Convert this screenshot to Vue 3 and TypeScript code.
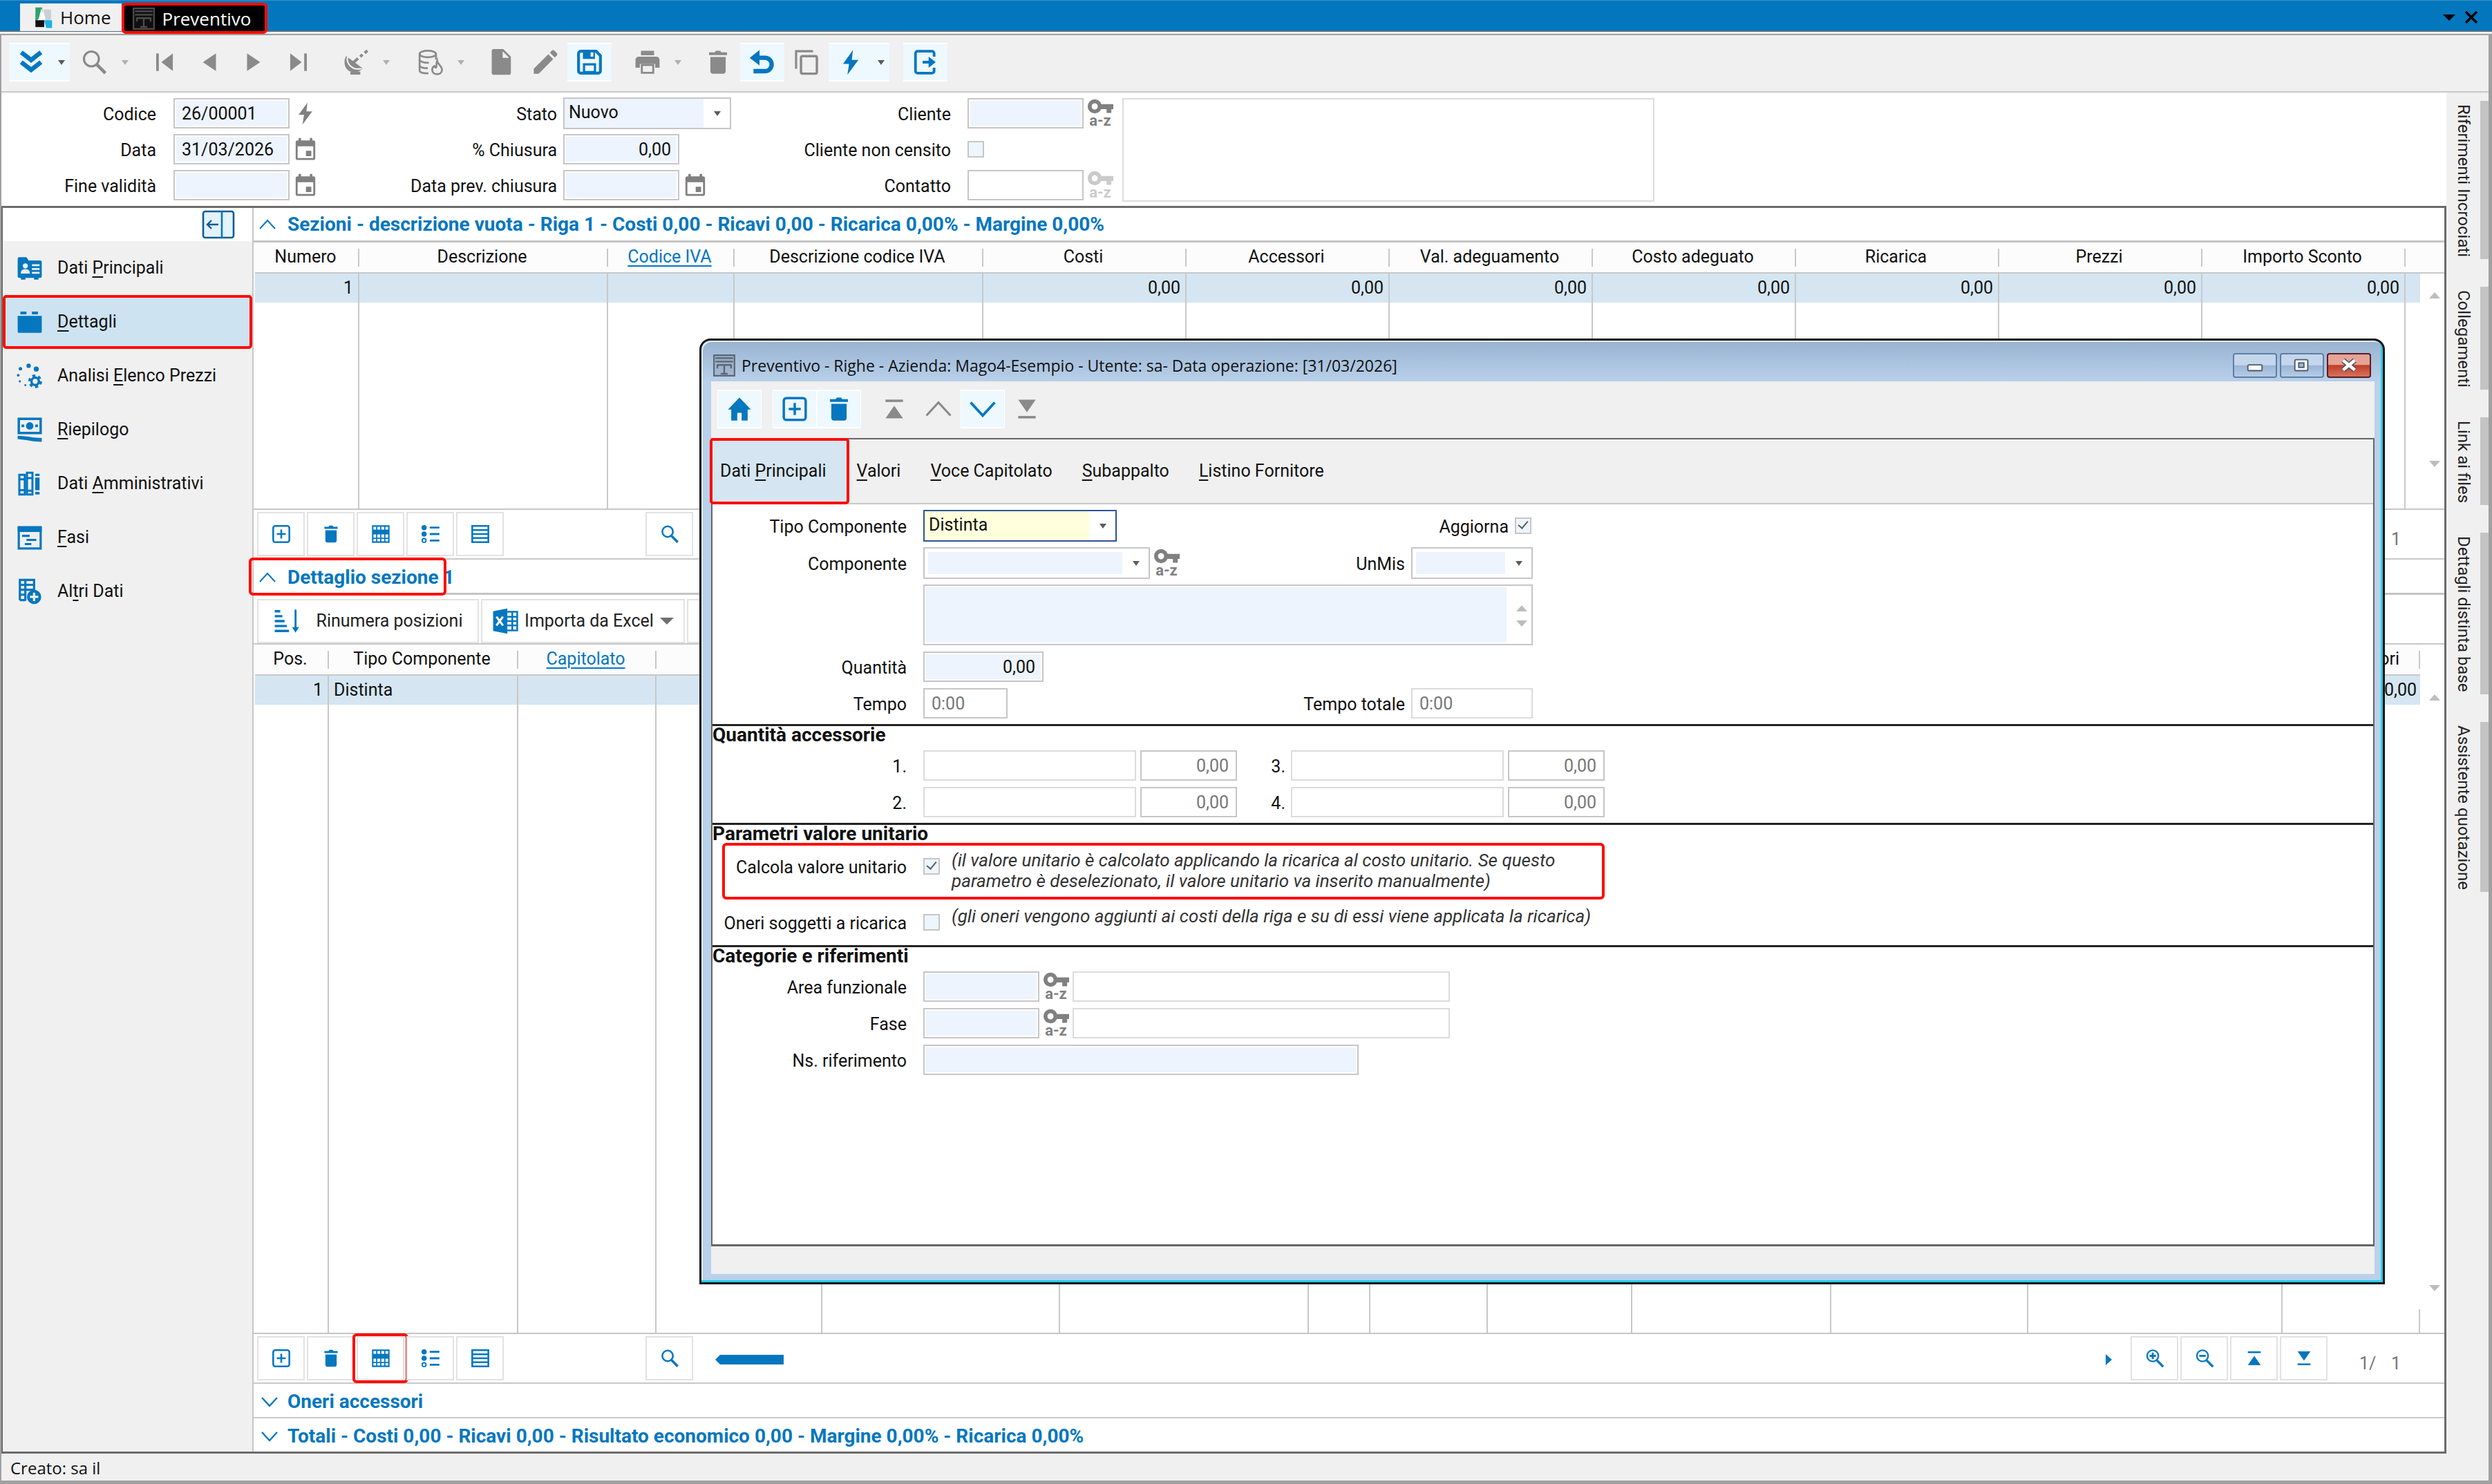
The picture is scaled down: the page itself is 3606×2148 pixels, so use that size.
<script setup lang="ts">
import { h, ref, type FunctionalComponent } from 'vue'

/* Glyphs on a 24 x 24 grid; everything inherits currentColor. */
const glyphs: Record<string, string> = {
  chevrons: '<path d="M3 3l9 7 9-7M3 12l9 7 9-7" fill="none" stroke="currentColor" stroke-width="4.2"/>',
  search: '<circle cx="9" cy="9" r="6.8" fill="none" stroke="currentColor" stroke-width="2"/><path d="M13.8 14l8 8" stroke="currentColor" stroke-width="3"/>',
  find: '<circle cx="9.5" cy="9" r="6.6" fill="none" stroke="currentColor" stroke-width="2.2"/><path d="M14 14l8 8" stroke="currentColor" stroke-width="3"/>',
  first: '<path d="M5 4v16" stroke="currentColor" stroke-width="2.4"/><path d="M19 4v16L8.500 12z" fill="currentColor"/>',
  prev: '<path d="M18 4v16L6 12z" fill="currentColor"/>',
  next: '<path d="M6 4v16l12-8z" fill="currentColor"/>',
  last: '<path d="M19 4v16" stroke="currentColor" stroke-width="2.4"/><path d="M5 4v16l10.500-8z" fill="currentColor"/>',
  dish: '<path d="M3 6.500C0 12 2 19 7 20.500c4 1.500 9 .5 11-3L9.500 11 3 6.500z" fill="currentColor"/><path d="M4.500 7.500C3 11 6 16 10 17.500s7 .5 7 0" fill="none" stroke="#f0f0f0" stroke-width="1.400"/><path d="M10 12l4-3.500M16 7l2-2M20 3.500l2.500-2M7 22h9" stroke="currentColor" stroke-width="2.600"/>',
  stack: '<g fill="none" stroke="currentColor" stroke-width="1.700"><ellipse cx="9.500" cy="4.500" rx="7.500" ry="3"/><path d="M2 4.500v15C2 21.500 6 22.500 10 22M17 4.500v5M2 9.500c0 2 4 3.200 8.500 3M2 14.500c0 2 3 3 7.500 3"/><path d="M18 10.500c.5 3.500 4.500 5 4.500 8.500 0 2.500-2 4-4.500 4s-4.500-1.500-4.500-4c0-2 1-3 2-3.500.5 1 1 1.500 1.500 1.500 1-1.500 0-4 1-6.500z"/></g>',
  doc: '<path d="M5 0h9l7 7v15q0 1.500-1.500 1.500H5Q3.500 23.500 3.500 22V1.500Q3.500 0 5 0z" fill="currentColor"/><path d="M13.500 2v6h6z" fill="#f0f0f0"/>',
  pencil: '<path d="M1.500 22.500V18L14.800 4.700l4.500 4.500L6 22.500zM16.200 3.300l2-2q1-.8 2 0l2.500 2.500q.8 1 0 2l-2 2z" fill="currentColor"/>',
  save: '<path d="M4 2h14l4 4v14a2 2 0 0 1-2 2H4a2 2 0 0 1-2-2V4a2 2 0 0 1 2-2z" fill="none" stroke="currentColor" stroke-width="2.600"/><path d="M6 2h11v7H6zM6 13h12v9H6z" fill="currentColor"/><path d="M13 3h2.500v4H13zM8 15h8v5H8z" fill="#edf8ff"/>',
  print: '<path d="M6 1.500h12v4.200H6zM4.500 7h15Q23 7 23 10v7h-4v-3.500H5V17H1v-7q0-3 3.500-3z" fill="currentColor"/><path d="M6.800 14.500h10.400v7.200H6.800z" fill="none" stroke="currentColor" stroke-width="1.800"/>',
  trash: '<path d="M5 7.200h14V20q0 2.500-2.500 2.500h-9Q5 22.500 5 20zM3.800 3H9l1-1.500h4L15 3h5.200v2.500H3.800z" fill="currentColor"/>',
  undo: '<path d="M6 8h8.500a6 6 0 0 1 0 12.200H4" fill="none" stroke="currentColor" stroke-width="4"/><path d="M.5 8L9.500 1v14z" fill="currentColor"/>',
  copy: '<path d="M2.500 18V2H18" fill="none" stroke="currentColor" stroke-width="2"/><rect x="7" y="6.500" width="14.500" height="16" rx="1.500" fill="none" stroke="currentColor" stroke-width="2.200"/>',
  bolt: '<path d="M14 1L5 13.500h5.500L9 23.500 19 10h-6z" fill="currentColor"/>',
  exit: '<path d="M20 7V4a2 2 0 0 0-2-2H5a2 2 0 0 0-2 2v16a2 2 0 0 0 2 2h13a2 2 0 0 0 2-2v-3" fill="none" stroke="currentColor" stroke-width="2.400"/><path d="M9.500 10.800H15V7l6.500 5-6.500 5v-3.800H9.500z" fill="currentColor"/>',
  calendar: '<path d="M4 3h16q2 0 2 2v16q0 2-2 2H4q-2 0-2-2V5q0-2 2-2zm0 6v12h16V9z" fill="currentColor" fill-rule="evenodd"/><path d="M5 .5h2.500V4H5zM16.500.5H19V4h-2.500zM12.500 13.500H18V19h-5.500z" fill="currentColor"/>',
  key: '<circle cx="7" cy="12" r="4.600" fill="none" stroke="currentColor" stroke-width="3.600"/><path d="M12 10h12v4.500h-1.800V18h-4.400v-3.500H12z" fill="currentColor"/>',
  home: '<path d="M12 1.500L1.500 12.500H4.500V22.500h5.500v-7h4v7h5.500v-10h3z" fill="currentColor"/>',
  plus: '<rect x="2" y="2" width="20" height="20" rx="2.500" fill="none" stroke="currentColor" stroke-width="2.200"/><path d="M12 6.500v11M6.500 12h11" stroke="currentColor" stroke-width="2.200"/>',
  top: '<path d="M4 4.500h16" stroke="currentColor" stroke-width="2.200"/><path d="M4 20.500L12 9l8 11.500z" fill="currentColor"/>',
  bottom: '<path d="M4 19.500h16" stroke="currentColor" stroke-width="2.200"/><path d="M4 3.500L12 15l8-11.500z" fill="currentColor"/>',
  up: '<path d="M1 18L12 6l11 12" fill="none" stroke="currentColor" stroke-width="2"/>',
  down: '<path d="M1 6l11 12L23 6" fill="none" stroke="currentColor" stroke-width="2.400"/>',
  grid: '<path d="M2 2h20v20H2z" fill="none" stroke="currentColor" stroke-width="1.800"/><path d="M2 6.500h20v6H2z" fill="currentColor"/><path d="M7 2v20M12 2v20M17 2v20M2 17.200h20" stroke="currentColor" stroke-width="1.500"/>',
  bullets: '<circle cx="4" cy="4" r="3.200" fill="currentColor"/><circle cx="4" cy="12" r="3.200" fill="currentColor"/><circle cx="4" cy="20" r="2.400" fill="none" stroke="currentColor" stroke-width="1.600"/><path d="M11 4h12M11 12h12M11 20h12" stroke="currentColor" stroke-width="2.400"/>',
  rows: '<path d="M2 2h20v20H2zM2 7h20M2 12h20M2 17h20" fill="none" stroke="currentColor" stroke-width="2.200"/>',
  zoomin: '<circle cx="9.500" cy="9" r="7" fill="none" stroke="currentColor" stroke-width="2"/><path d="M14.500 14.500l8 8" stroke="currentColor" stroke-width="2.800"/><path d="M9.500 5v8M5.500 9h8" stroke="currentColor" stroke-width="2.400"/>',
  zoomout: '<circle cx="9.500" cy="9" r="7" fill="none" stroke="currentColor" stroke-width="2"/><path d="M14.500 14.500l8 8" stroke="currentColor" stroke-width="2.800"/><path d="M5.500 9h8" stroke="currentColor" stroke-width="2.400"/>',
  panel: '<rect x="1" y="2.500" width="22" height="19" rx="1.500" fill="#e4f2fb" stroke="#0b5c94" stroke-width="1.300"/><path d="M14.500 2.500v19" stroke="currentColor" stroke-width="1.300"/><path d="M12 12H4M7 9l-3 3 3 3" fill="none" stroke="#0b5c94" stroke-width="1.200"/>',
  idcard: '<path d="M1 3.500Q1 2 2.500 2H9l2 3h10.500Q23 5 23 6.500v13Q23 21 21.500 21H20v1.500h-4V21H8v1.500H4V21H2.500Q1 21 1 19.500z" fill="currentColor"/><circle cx="8" cy="10" r="2.300" fill="#f0f0f0"/><path d="M3.800 17q0-4 4.200-4t4.200 4zM14 8.500h7v1.700h-7zM14 12h7v1.700h-7zM14 15.500h7v1.700h-7z" fill="#f0f0f0"/>',
  box: '<path d="M1 6.500h22V21q0 1-1 1H2q-1 0-1-1zM3.500 2.500H9V5H3.500zM14 2.500h5.500V5H14z" fill="currentColor"/>',
  process: '<g fill="currentColor"><circle cx="11" cy="2.800" r="2"/><circle cx="18" cy="5.800" r="2.300"/><circle cx="3.500" cy="5.500" r="1.600"/><circle cx="1.500" cy="11.500" r="1.200"/><circle cx="3" cy="17" r="1"/><circle cx="8" cy="20.500" r=".9"/></g><circle cx="17" cy="17" r="3.400" fill="none" stroke="currentColor" stroke-width="2.200"/><circle cx="17" cy="17" r="5.200" fill="none" stroke="currentColor" stroke-width="2.200" stroke-dasharray="2.700 2.740"/>',
  cash: '<path d="M2 2h20v13H2z" fill="none" stroke="currentColor" stroke-width="2.200"/><circle cx="12" cy="8.500" r="3.400" fill="currentColor"/><path d="M4.500 8.500h2.500M17 8.500h2.500" stroke="currentColor" stroke-width="2.400"/><path d="M1 17.500c7 0 14 2 22 2v3.500c-8 0-15-2-22-2.500z" fill="currentColor"/>',
  binders: '<g fill="none" stroke="currentColor" stroke-width="1.900"><path d="M2.500 4h5v18h-5zM9.500 2h5v20h-5zM2.500 8h5M9.500 7h5M2.500 18h5M9.500 18.500h5"/></g><path d="M17 3h4v2h-4zM17 6.500h4V18h-4zM17 19.500h4V22h-4z" fill="currentColor"/>',
  gantt: '<path d="M2 2.500h20v19.500H2z" fill="none" stroke="currentColor" stroke-width="2"/><path d="M1 2h22v5H1z" fill="currentColor"/><path d="M5 10.500h7M9 14.200h9M7.500 18h6" stroke="currentColor" stroke-width="2"/>',
  dbplus: '<path d="M3 1.500h13v9H3zM3 6h13M8 1.500v9M3 10.500V20M3 15h5M3 20h5M8 10.500v10" fill="none" stroke="currentColor" stroke-width="2"/><circle cx="16" cy="17" r="6.500" fill="currentColor"/><path d="M16 13.200v7.600M12.200 17h7.600" stroke="#f0f0f0" stroke-width="2"/>',
  sort: '<path d="M1 3h5M1 7.500h7M1 12h9M1 16.500h11M1 21h13" stroke="currentColor" stroke-width="2.200"/><path d="M20 1.500v18" stroke="currentColor" stroke-width="1.800"/><path d="M16.800 17.500h6.400L20 22.500z" fill="currentColor"/>',
  excel: '<path d="M1 3l13-2.500v23L1 21z" fill="currentColor"/><path d="M4 8l6 8M10 8l-6 8" stroke="#fff" stroke-width="2"/><path d="M14 3.500h9v17h-9M14 8h9M14 12h9M14 16h9M18.500 3.500v17" fill="none" stroke="currentColor" stroke-width="1.600"/>',
  brand: '<path d="M3 2h7v9l-7 5z" fill="#2fa36b"/><path d="M11 4h8v10l-5 3z" fill="#c9d0d4"/><path d="M3 15h9v7H3z" fill="#101010"/><path d="M12 15h8v8h-6z" fill="#1fb0e6"/><path d="M9 3l4 10-7 2z" fill="#fff"/>',
  form: '<path d="M1.500 1.500h21v21h-21z" fill="currentColor" fill-opacity=".2" stroke="currentColor" stroke-width="1.500"/><path d="M3 4.500h18M3 8h18" stroke="currentColor" stroke-width="1.500"/><path d="M5 11.500h14M5 11v4M19 11v4M12 12v8M8.500 20.500h7" fill="none" stroke="currentColor" stroke-width="1.700"/>',
}

const Icon: FunctionalComponent<{ name: string }> = (props) =>
  h('svg', { viewBox: '0 0 24 24', 'aria-hidden': 'true', innerHTML: glyphs[props.name] })
Icon.props = ['name']

interface Tool { icon: string; title: string; on?: boolean; menu?: boolean }
const toolGroups: { wide: boolean; tools: Tool[] }[] = [
  { wide: false, tools: [{ icon: 'chevrons', title: 'Altro', on: true, menu: true }, { icon: 'search', title: 'Cerca', menu: true }] },
  { wide: false, tools: [{ icon: 'first', title: 'Primo' }, { icon: 'prev', title: 'Precedente' }, { icon: 'next', title: 'Successivo' }, { icon: 'last', title: 'Ultimo' }] },
  { wide: true, tools: [{ icon: 'dish', title: 'Radar', menu: true }] },
  { wide: true, tools: [{ icon: 'stack', title: 'Query', menu: true }] },
  { wide: false, tools: [{ icon: 'doc', title: 'Nuovo' }, { icon: 'pencil', title: 'Modifica' }, { icon: 'save', title: 'Salva', on: true }] },
  { wide: true, tools: [{ icon: 'print', title: 'Stampa', menu: true }] },
  { wide: false, tools: [{ icon: 'trash', title: 'Elimina' }, { icon: 'undo', title: 'Annulla', on: true }, { icon: 'copy', title: 'Copia' }, { icon: 'bolt', title: 'Azioni', on: true, menu: true }] },
  { wide: true, tools: [{ icon: 'exit', title: 'Esci', on: true }] },
]
const dialogGroups: Tool[][] = [
  [{ icon: 'home', title: 'Home', on: true }],
  [{ icon: 'plus', title: 'Aggiungi riga', on: true }, { icon: 'trash', title: 'Elimina riga', on: true }],
  [{ icon: 'top', title: 'Prima riga' }, { icon: 'up', title: 'Riga precedente' }, { icon: 'down', title: 'Riga successiva', on: true }, { icon: 'bottom', title: 'Ultima riga' }],
]
const gridTools: Tool[] = [
  { icon: 'plus', title: 'Aggiungi' }, { icon: 'trash', title: 'Elimina' }, { icon: 'grid', title: 'Apri riga' },
  { icon: 'bullets', title: 'Elenco' }, { icon: 'rows', title: 'Colonne' },
]
const pageTools: Tool[] = [
  { icon: 'zoomin', title: 'Ingrandisci' }, { icon: 'zoomout', title: 'Riduci' },
  { icon: 'top', title: 'Inizio' }, { icon: 'bottom', title: 'Fine' },
]

/* [text before, access key, text after] */
type Caption = [string, string, string]
const menu: { icon: string; text: Caption; current?: boolean }[] = [
  { icon: 'idcard', text: ['Dati ', 'P', 'rincipali'] },
  { icon: 'box', text: ['', 'D', 'ettagli'], current: true },
  { icon: 'process', text: ['Analisi ', 'E', 'lenco Prezzi'] },
  { icon: 'cash', text: ['', 'R', 'iepilogo'] },
  { icon: 'binders', text: ['Dati ', 'A', 'mministrativi'] },
  { icon: 'gantt', text: ['', 'F', 'asi'] },
  { icon: 'dbplus', text: ['Al', 't', 'ri Dati'] },
]
const tabs: Caption[] = [
  ['Dati ', 'P', 'rincipali'], ['', 'V', 'alori'], ['', 'V', 'oce Capitolato'], ['', 'S', 'ubappalto'], ['', 'L', 'istino Fornitore'],
]
const sideTabs = ['Riferimenti Incrociati', 'Collegamenti', 'Link ai files', 'Dettagli distinta base', 'Assistente quotazione']

interface Column { title: string; width?: number; value?: string; num?: boolean; link?: boolean }
const amount = (title: string): Column => ({ title, width: 294, value: '0,00', num: true })
const sections: Column[] = [
  { title: 'Numero', width: 151, value: '1', num: true },
  { title: 'Descrizione', width: 360 },
  { title: 'Codice IVA', width: 183, link: true },
  { title: 'Descrizione codice IVA', width: 360 },
  ...['Costi', 'Accessori', 'Val. adeguamento', 'Costo adeguato', 'Ricarica', 'Prezzi', 'Importo Sconto'].map(amount),
  { title: '' },
]
const details: Column[] = [
  { title: 'Pos.', width: 107, value: '1', num: true },
  { title: 'Tipo Componente', width: 274, value: 'Distinta' },
  { title: 'Capitolato', width: 200, link: true },
  ...[240, 344, 360, 89, 170, 209, 288, 285, 368].map((width) => ({ title: '', width })),
  { title: 'Accessori', value: '0,00', num: true },
]

const codice = ref('26/00001')
const data = ref('31/03/2026')
const chiusura = ref('0,00')
const quantita = ref('0,00')
const aggiorna = ref(true)
const calcola = ref(true)
</script>

<template>
  <div class="app">
    <header class="topbar">
      <button class="doc-tab"><Icon name="brand" class="i34" />Home</button>
      <button class="doc-tab active"><Icon name="form" class="i34" />Preventivo</button>
      <span class="spacer"></span>
      <button class="win-icon" aria-label="Elenco schede"><svg viewBox="0 0 20 20"><path d="M1 6h18l-9 9z" fill="#000" /></svg></button>
      <button class="win-icon" aria-label="Chiudi scheda"><svg viewBox="0 0 20 20"><path d="M2 2l16 16M18 2L2 18" stroke="#000" stroke-width="3.500" /></svg></button>
    </header>

    <div class="frame">
      <div class="toolbar">
        <div v-for="(g, i) in toolGroups" :key="i" class="group" :class="{ wide: g.wide }">
          <button v-for="t in g.tools" :key="t.icon" class="tool" :class="{ on: t.on }" :title="t.title">
            <span class="tool-icon"><Icon :name="t.icon" class="i38" /></span>
            <span v-if="t.menu" class="tool-caret"><i class="caret"></i></span>
          </button>
        </div>
      </div>

      <div class="desk">
        <div class="workspace">
          <form class="head-form" @submit.prevent>
            <div class="col c1">
              <div class="field"><label for="codice">Codice</label><input id="codice" v-model="codice" class="w167"><Icon name="bolt" class="grey i34" /></div>
              <div class="field"><label for="data">Data</label><input id="data" v-model="data" class="w167"><Icon name="calendar" class="grey i34" /></div>
              <div class="field"><label for="fine">Fine validità</label><input id="fine" class="w167"><Icon name="calendar" class="grey i34" /></div>
            </div>
            <div class="col c2">
              <div class="field"><label for="stato">Stato</label><span class="pick w243"><select id="stato"><option>Nuovo</option></select><i class="caret"></i></span></div>
              <div class="field"><label for="chiusura">% Chiusura</label><input id="chiusura" v-model="chiusura" class="w167 num"></div>
              <div class="field"><label for="prev">Data prev. chiusura</label><input id="prev" class="w167"><Icon name="calendar" class="grey i34" /></div>
            </div>
            <div class="col c3">
              <div class="field"><label for="cliente">Cliente</label><input id="cliente" class="w167"><span class="key"><Icon name="key" class="key-icon" />a-z</span></div>
              <div class="field"><label for="censito">Cliente non censito</label><input id="censito" type="checkbox"></div>
              <div class="field"><label for="contatto">Contatto</label><input id="contatto" class="w167 plain"><span class="key dim"><Icon name="key" class="key-icon" />a-z</span></div>
            </div>
            <textarea class="client-box" aria-label="Dati cliente" readonly></textarea>
          </form>

          <div class="main">
            <nav class="sidebar">
              <div class="side-top"><button class="fold" aria-label="Comprimi menu"><Icon name="panel" class="i48 blue" /></button></div>
              <button v-for="m in menu" :key="m.icon" class="side-item" :class="{ current: m.current }">
                <Icon :name="m.icon" class="i38 blue" />
                <span>{{ m.text[0] }}<u>{{ m.text[1] }}</u>{{ m.text[2] }}</span>
              </button>
            </nav>

            <div class="panels">
              <h2 class="section thick"><Icon name="up" class="i24" />Sezioni - descrizione vuota - Riga 1 - Costi 0,00 - Ricavi 0,00 - Ricarica 0,00% - Margine 0,00%</h2>
              <div class="grid-box first-grid">
                <table>
                  <colgroup><col v-for="(c, i) in sections" :key="i" :style="c.width ? { width: c.width + 'px' } : undefined"></colgroup>
                  <thead><tr><th v-for="(c, i) in sections" :key="i" :class="{ last: !c.width }"><a v-if="c.link" href="#">{{ c.title }}</a><template v-else>{{ c.title }}</template></th></tr></thead>
                  <tbody>
                    <tr class="sel"><td v-for="(c, i) in sections" :key="i" :class="{ num: c.num }">{{ c.value }}</td></tr>
                    <tr class="blank"><td v-for="(c, i) in sections" :key="i"></td></tr>
                  </tbody>
                </table>
                <div class="gutter ruled"><i class="arrow up"></i><i class="arrow"></i></div>
              </div>
              <div class="grid-bar">
                <button v-for="t in gridTools" :key="t.icon" class="cell-btn" :title="t.title"><Icon :name="t.icon" class="i28" /></button>
                <button class="cell-btn seek" title="Trova"><Icon name="find" class="i28" /></button>
                <span class="spacer"></span>
                <span class="pages"><span>1/</span><span>1</span></span>
              </div>

              <h2 class="section thick marked"><Icon name="up" class="i24" />Dettaglio sezione 1</h2>
              <div class="grid-bar actions">
                <button class="cell-btn text-btn renum"><Icon name="sort" class="i38 blue" />Rinumera posizioni</button>
                <button class="cell-btn text-btn"><Icon name="excel" class="i38 blue" />Importa da Excel<i class="caret big"></i></button>
                <button class="cell-btn" aria-label="Altre azioni"></button>
              </div>
              <div class="grid-box fill">
                <table>
                  <colgroup><col v-for="(c, i) in details" :key="i" :style="c.width ? { width: c.width + 'px' } : undefined"></colgroup>
                  <thead><tr><th v-for="(c, i) in details" :key="i" :class="{ tail: !c.width }"><a v-if="c.link" href="#">{{ c.title }}</a><template v-else>{{ c.title }}</template></th></tr></thead>
                  <tbody>
                    <tr class="sel"><td v-for="(c, i) in details" :key="i" :class="{ num: c.num }">{{ c.value }}</td></tr>
                    <tr class="blank"><td v-for="(c, i) in details" :key="i"></td></tr>
                  </tbody>
                </table>
                <div class="gutter"><i class="arrow up"></i><i class="arrow"></i></div>
              </div>
              <div class="grid-bar">
                <button v-for="t in gridTools" :key="t.icon" class="cell-btn" :class="{ ringed: t.icon === 'grid' }" :title="t.title"><Icon :name="t.icon" class="i28" /></button>
                <button class="cell-btn seek" title="Trova"><Icon name="find" class="i28" /></button>
                <span class="hscroll"></span>
                <span class="spacer"></span>
                <i class="hnext"></i>
                <button v-for="t in pageTools" :key="t.icon" class="cell-btn" :title="t.title"><Icon :name="t.icon" class="i28" /></button>
                <span class="pages"><span>1/</span><span>1</span></span>
              </div>
              <h2 class="section low"><Icon name="down" class="i24" />Oneri accessori</h2>
              <h2 class="section low end"><Icon name="down" class="i24" />Totali - Costi 0,00 - Ricavi 0,00 - Risultato economico 0,00 - Margine 0,00% - Ricarica 0,00%</h2>
            </div>
          </div>
        </div>

        <aside class="strip">
          <button v-for="s in sideTabs" :key="s">{{ s }}</button>
        </aside>
      </div>
      <footer class="status">Creato: sa il</footer>
    </div>

    <section class="dialog" role="dialog" aria-labelledby="dlg-title">
      <header class="dlg-head">
        <Icon name="form" class="i34 steel" />
        <h1 id="dlg-title">Preventivo - Righe - Azienda: Mago4-Esempio - Utente: sa- Data operazione: [31/03/2026]</h1>
        <span class="spacer"></span>
        <button class="win-btn" aria-label="Riduci a icona"><svg viewBox="0 0 64 36"><rect x="21" y="17" width="22" height="9" rx="2" fill="#fff" stroke="#4d5a6b" stroke-width="2" /></svg></button>
        <button class="win-btn" aria-label="Ingrandisci"><svg viewBox="0 0 64 36"><rect x="21" y="9" width="20" height="17" rx="2" fill="#fff" stroke="#4d5a6b" stroke-width="2" /><rect x="27" y="14" width="8" height="7" fill="#9fb8d6" stroke="#4d5a6b" stroke-width="2" /></svg></button>
        <button class="win-btn close" aria-label="Chiudi"><svg viewBox="0 0 64 36"><path d="M23 10l18 15M41 10L23 25" stroke="#51505c" stroke-width="8" /><path d="M23 10l18 15M41 10L23 25" stroke="#fff" stroke-width="5" /></svg></button>
      </header>
      <div class="dlg-body">
        <div class="dlg-tools">
          <div v-for="(g, i) in dialogGroups" :key="i" class="group">
            <button v-for="t in g" :key="t.icon" class="tool" :class="{ on: t.on }" :title="t.title"><span class="tool-icon"><Icon :name="t.icon" class="i38" /></span></button>
          </div>
        </div>
        <div class="dlg-page">
          <nav class="tabs">
            <button v-for="(t, i) in tabs" :key="i" class="tab" :class="{ current: i === 0 }"><span>{{ t[0] }}<u>{{ t[1] }}</u>{{ t[2] }}</span></button>
          </nav>
          <form class="dlg-form" @submit.prevent>
            <div class="block top-block">
              <div class="field tall"><label for="tipo">Tipo Componente</label><span class="pick focus w280"><select id="tipo"><option>Distinta</option></select><i class="caret"></i></span>
                <label for="aggiorna" class="second agg">Aggiorna</label><input id="aggiorna" v-model="aggiorna" type="checkbox"></div>
              <div class="field"><label for="componente">Componente</label><span class="pick inset w328"><select id="componente"><option></option></select><i class="caret"></i></span><span class="key"><Icon name="key" class="key-icon" />a-z</span>
                <label for="unmis" class="second um">UnMis</label><span class="pick inset w176"><select id="unmis"><option></option></select><i class="caret"></i></span></div>
              <div class="field memo-row"><label for="memo"></label><span class="memo"><textarea id="memo" aria-label="Descrizione componente"></textarea><span class="memo-arrows"><i class="arrow up"></i><i class="arrow"></i></span></span></div>
              <div class="field"><label for="quantita">Quantità</label><input id="quantita" v-model="quantita" class="w174 num"></div>
              <div class="field"><label for="tempo">Tempo</label><input id="tempo" class="w122 plain" value="0:00" readonly>
                <label for="totale" class="second tot">Tempo totale</label><input id="totale" class="w176 plain light" value="0:00" readonly></div>
            </div>
            <fieldset class="block">
              <legend>Quantità accessorie</legend>
              <div v-for="r in [[1, 3], [2, 4]]" :key="r[0]" class="field">
                <template v-for="(n, i) in r" :key="n">
                  <label :for="'acc' + n" :class="{ nth: i === 1 }">{{ n }}.</label><input :id="'acc' + n" class="w308 plain light" readonly><input class="w140 plain num" value="0,00" :aria-label="'Quantità ' + n" readonly>
                </template>
              </div>
            </fieldset>
            <fieldset class="block params">
              <legend>Parametri valore unitario</legend>
              <div class="field boxed"><label for="calcola">Calcola valore unitario</label><input id="calcola" v-model="calcola" type="checkbox"><p>(il valore unitario è calcolato applicando la ricarica al costo unitario. Se questo<br>parametro è deselezionato, il valore unitario va inserito manualmente)</p></div>
              <div class="field oneri"><label for="oneri">Oneri soggetti a ricarica</label><input id="oneri" type="checkbox"><p>(gli oneri vengono aggiunti ai costi della riga e su di essi viene applicata la ricarica)</p></div>
            </fieldset>
            <fieldset class="block">
              <legend>Categorie e riferimenti</legend>
              <div class="field"><label for="area">Area funzionale</label><input id="area" class="w167"><span class="key"><Icon name="key" class="key-icon" />a-z</span><input class="w546 plain light" aria-label="Descrizione area funzionale" readonly></div>
              <div class="field"><label for="fase">Fase</label><input id="fase" class="w167"><span class="key"><Icon name="key" class="key-icon" />a-z</span><input class="w546 plain light" aria-label="Descrizione fase" readonly></div>
              <div class="field"><label for="rif">Ns. riferimento</label><input id="rif" class="w630"></div>
            </fieldset>
          </form>
        </div>
        <div class="dlg-status"></div>
      </div>
    </section>
  </div>
</template>

<style>
body { margin: 0; }
</style>

<style scoped>
* { box-sizing: border-box; }
.app { position: relative; display: flex; flex-direction: column; min-height: 100vh; font: 25px/30px Roboto, sans-serif; color: #111; background: #f0f0f0; }
button, input, select, textarea { font: inherit; color: inherit; margin: 0; }
button { padding: 0; border: 0; background: none; display: flex; align-items: center; }
svg { display: block; flex: none; }
h1, h2, p { margin: 0; }
u { text-underline-offset: 4px; text-decoration-thickness: 2px; }
.spacer { flex: 1; }
.blue { color: #0477bf; }
.grey { color: #808080; }
.steel { color: #5c6773; }
.i24 { width: 24px; height: 24px; }
.i28 { width: 28px; height: 28px; }
.i34 { width: 34px; height: 34px; }
.i38 { width: 38px; height: 38px; }
.i48 { width: 48px; height: 48px; }

.caret { display: block; width: 0; height: 0; border: 5px solid transparent; border-top: 7px solid #5c5c5c; border-bottom: 0; }
.caret.big { border-width: 10px 10px 0; border-top-color: #707070; }
.arrow { display: block; width: 0; height: 0; border: 8px solid transparent; border-top: 9px solid #bdbdbd; border-bottom: 0; }
.arrow.up { border-top: 0; border-bottom: 9px solid #bdbdbd; }

.topbar { display: flex; align-items: flex-start; height: 46px; padding: 4px 14px 0 29px; background: #0277be; border-top: 1px solid #3d8fc4; border-bottom: 2px solid #56707f; font: 26px/36px "Open Sans", "Noto Sans", sans-serif; }
.doc-tab { height: 40px; gap: 6px; padding: 0 16px 0 18px; background: #f0f0f0; }
.doc-tab.active { position: relative; height: 45px; margin-top: -1px; padding: 0 20px 0 11px; gap: 9px; border: 4px solid #ff0c00; border-radius: 6px; background: #000; color: #fff; }
.doc-tab.active svg { color: #4c4c4c; }
.win-icon { width: 32px; height: 40px; justify-content: center; }
.win-icon svg { width: 20px; height: 20px; }

.frame { flex: 1; display: flex; flex-direction: column; margin-top: 3px; border: solid #a0a0a0; border-width: 2px 5px 5px 2px; }
.toolbar { display: flex; height: 83px; padding: 11px 0 0 11px; border-bottom: 2px solid #c8c8c8; }
.group { display: flex; margin-left: 14px; }
.group:first-child { margin-left: 0; }
.group.wide { margin-left: 20px; }
.toolbar .group:first-child { gap: 4px; }
.tool { height: 56px; color: #8a8a8a; border: 0 solid #fff; }
.tool.on { color: #0477bf; background: #edf8ff; border-width: 2px 0; }
.tool-icon { width: 64px; display: flex; justify-content: center; }
.tool-caret { width: 24px; display: flex; justify-content: center; }
.tool:not(.on) .caret { border-top-color: #b0b0b0; }

.desk { flex: 1; display: flex; }
.workspace { flex: 1; min-width: 0; display: flex; flex-direction: column; }
.head-form { display: flex; height: 164px; padding: 8px 0 0; background: #fff; }
.col { display: flex; flex-direction: column; gap: 8px; }
.field { display: flex; align-items: center; height: 44px; }
.field label { flex: none; padding-top: 3px; text-align: right; white-space: nowrap; }
.c1 { width: 464px; }
.c1 label { width: 224px; margin-right: 25px; }
.c2 { width: 606px; }
.c2 label { width: 340px; margin-right: 9px; }
.c3 { width: 552px; }
.c3 label { width: 304px; margin-right: 24px; }
.c1 .grey, .c2 .grey { margin-left: 6px; }

input, textarea { border: 2px solid #c6c6c6; border-radius: 0; background: #edf4fd; box-shadow: inset 0 0 0 2px #fff; outline: 0; }
input { height: 44px; padding: 0 10px; }
input.plain { background: #fff; color: #777; }
input.light { border-color: #dcdcdc; }
.num { text-align: right; }
input[type='checkbox'] { appearance: none; position: relative; flex: none; width: 24px; height: 24px; padding: 0; box-shadow: none; background: #edf6fd; }
input[type='checkbox']:checked::after { content: ''; position: absolute; left: 6px; top: 0; width: 6px; height: 12px; border: solid #5a5a5a; border-width: 0 2px 2px 0; transform: rotate(40deg); }
.w122 { width: 122px; }
.w140 { width: 140px; }
.w167 { width: 168px; }
.w174 { width: 174px; }
.w176 { width: 176px; }
.w243 { width: 243px; }
.w280 { width: 280px; }
.w308 { width: 308px; }
.w328 { width: 328px; }
.w546 { width: 546px; }
.w630 { width: 630px; }
.pick { position: relative; display: block; }
.pick select { display: block; width: 100%; height: 46px; padding: 0 6px 2px; border: 2px solid #c6c6c6; border-radius: 0; appearance: none; outline: 0; background: linear-gradient(to left, #fff 38px, #edf4fd 38px); }
.pick.focus select { border-color: #2d5597; background: linear-gradient(to left, #fff 38px, #ffffdc 38px); }
.pick.inset select { box-shadow: inset 0 0 0 5px #fff; }
.pick .caret { position: absolute; right: 15px; top: 20px; }
.key { display: flex; flex-direction: column; align-items: center; width: 48px; height: 44px; font: bold 22px/22px Roboto, sans-serif; color: #808080; }
.key.dim { color: #cacaca; }
.key-icon { width: 38px; height: 38px; margin: -7px 0 -9px; }
.client-box { flex: none; width: 770px; height: 150px; border-color: #dcdcdc; background: #fff; resize: none; }

.main { flex: 1; display: flex; border: solid #6b6b6b; border-width: 3px 3px 3px 2px; background: #fff; }
.sidebar { flex: none; width: 361px; display: flex; flex-direction: column; background: #f0f0f0; }
.side-top { display: flex; justify-content: flex-end; align-items: center; height: 48px; padding-right: 25px; background: #fff; }
.side-item { height: 78px; gap: 21px; padding-left: 20px; border: 0 solid #ff0c00; text-align: left; }
.side-item.current { padding-left: 16px; border-width: 4px; border-radius: 5px; background: #cde3f1; }
.panels { flex: 1; min-width: 0; display: flex; flex-direction: column; border-left: 2px solid #c6c6c6; }
.section { position: relative; display: flex; align-items: center; gap: 17px; height: 50px; padding-left: 8px; border-bottom: 2px solid #c8c8c8; font: bold 28px/32px Roboto, sans-serif; color: #0477bf; white-space: nowrap; }
.section.thick { border-bottom: 3px solid #c4c4c4; }
.section.low { padding: 3px 0 0 11px; gap: 14px; }
.section.end { flex: none; height: 48px; border: 0; }
.section.marked { height: 51px; padding-top: 3px; }
.section.marked::before { content: ''; position: absolute; left: -7px; top: -3px; width: 278px; height: 47px; border: 4px solid #ff0c00; border-radius: 6px; }
.grid-box { display: flex; padding-left: 2px; border-bottom: 2px solid #c6c6c6; }
.first-grid { height: 387px; }
.grid-box.fill { flex: 1; }
table { flex: 1; width: 100%; min-width: 0; table-layout: fixed; border-collapse: separate; border-spacing: 0; }
th { height: 45px; padding: 0 5px 2px 0; border-bottom: 2px solid #c8c8c8; font-weight: normal; white-space: nowrap; background: #fcfcfc linear-gradient(#c8c8c8, #c8c8c8) no-repeat right center / 2px 26px; }
th.last { background: #fcfcfc; }
th.tail { padding-right: 30px; text-align: right; }
th a { color: #0477bf; text-underline-offset: 4px; text-decoration-thickness: 2px; }
td { padding: 0 7px; border-right: 2px solid #c8c8c8; white-space: nowrap; }
td:last-child { padding-right: 5px; border-right: 0; }
.sel td { height: 42px; background: #d5e6f2; }
.fill .blank td:last-child { background: linear-gradient(#c8c8c8, #c8c8c8) no-repeat right bottom / 2px 34px; }
.blank td { height: auto; }
.sel { height: 42px; }
.gutter { flex: none; width: 35px; display: flex; flex-direction: column; justify-content: space-between; align-items: center; padding: 72px 0 60px 6px; }
.gutter.ruled { background: linear-gradient(#fcfcfc 43px, #c8c8c8 43px, #c8c8c8 45px, #fff 45px); }
.grid-bar { display: flex; align-items: center; gap: 3px; height: 72px; padding-left: 5px; border-bottom: 2px solid #c8c8c8; }
.grid-bar.actions { padding-top: 5px; }
.cell-btn { position: relative; flex: none; justify-content: center; width: 69px; height: 64px; border: 2px solid #e2e2e2; background: #fff; color: #0477bf; }
.seek { margin-left: 202px; }
.text-btn { width: 295px; color: #222; gap: 9px; }
.text-btn.renum { width: 321px; gap: 24px; }
.ringed::after { content: ''; position: absolute; inset: -6px -8px; border: 4px solid #ff0c00; border-radius: 6px; }
.pages { display: flex; justify-content: space-between; width: 60px; margin: 16px 63px 0 43px; color: #777; }
.hscroll { width: 99px; height: 14px; margin: 4px 0 0 29px; background: #0477bf; clip-path: polygon(0 50%, 7px 0, 100% 0, 100% 100%, 7px 100%); }
.hnext { width: 0; height: 0; margin: 4px 24px 0 0; border: 8px solid transparent; border-left: 9px solid #0477bf; border-right: 0; }

.strip { flex: none; width: 61px; display: flex; flex-direction: column; gap: 40px; padding-top: 12px; }
.strip button { justify-content: flex-start; width: 61px; padding: 5px 0 3px; border-right: 12px solid #c4c4c4; writing-mode: vertical-rl; font-size: 24px; line-height: 49px; color: #222; white-space: nowrap; }
.status { height: 39px; padding-left: 13px; font: 24px/42px "Open Sans", "Noto Sans", sans-serif; }

.dialog { position: absolute; inset: 490px 155px 289px 1012px; display: flex; flex-direction: column; padding: 0 12px 12px 14px; border: 3px solid #111; border-radius: 16px 16px 0 0; background: linear-gradient(#98b3d1, #b9d1ea 60px); box-shadow: inset -3px -3px 0 #27cdea, inset 2px 2px 0 #dfeaf6; }
.dlg-head { display: flex; align-items: center; height: 59px; padding: 13px 5px 0 2px; gap: 4px; }
.dlg-head h1 { margin-left: 4px; font: 23px/32px "Open Sans", "Noto Sans", sans-serif; white-space: nowrap; }
.win-btn { width: 64px; height: 36px; border: 2px solid #5f7ea5; border-radius: 4px; background: linear-gradient(#c3d6ec 48%, #9ab5d5 50%, #b4cce7); justify-content: center; }
.win-btn svg { width: 60px; height: 34px; }
.win-btn.close { border-color: #5a1c22; background: linear-gradient(#e6a397 45%, #bf3f25 50%, #d67260); }
.dlg-body { flex: 1; display: flex; flex-direction: column; background: #f0f0f0; }
.dlg-tools { display: flex; height: 82px; padding: 12px 0 0 9px; }
.dlg-tools .tool.on { border-width: 2px 1px; }
.dlg-tools .tool { width: 64px; justify-content: center; }
.dlg-tools .group + .group { margin-left: 16px; }
.dlg-page { flex: 1; display: flex; flex-direction: column; border: solid #666; border-width: 2px 2px 3px; background: #fff; }
.tabs { display: flex; height: 94px; background: #f0f0f0; border-bottom: 2px solid #c8c8c8; }
.tab { padding: 0 30px 0 13px; }
.tab.current { margin: -2px -2px -2px -4px; padding: 0 29px 0 11px; border: 4px solid #ff0c00; border-radius: 5px; background: #d5e6f2; z-index: 1; }
.block { display: flex; flex-direction: column; gap: 9px; min-width: 0; margin: 0; padding: 0 0 8px; border: 0; border-bottom: 3px solid #222; }
.block:last-child { border: 0; }
.top-block { padding-top: 8px; }
.block .field.tall { height: 46px; }
.block .field label { width: 281px; margin-right: 24px; }
.block .field label.second { margin-right: 9px; }
.block .field label.agg { width: 567px; }
.block .field label.um { width: 321px; }
.block .field label.tot { width: 575px; }
.block .field label.nth { width: 70px; margin-right: 8px; }
.w308 + .w140 { margin-left: 6px; }
.block legend { float: left; padding: 0; font: bold 28px/26px Roboto, sans-serif; }
.block .memo-row { height: 88px; }
.memo { position: relative; display: block; width: 882px; height: 88px; }
.memo textarea { display: block; width: 100%; height: 88px; resize: none; background: linear-gradient(to left, #fff 36px, #edf4fd 36px); }
.memo-arrows { position: absolute; right: 8px; top: 30px; display: flex; flex-direction: column; gap: 13px; }
.block.params { gap: 0; padding: 0; }
.field p { margin-left: 17px; font-size: 26px; font-style: italic; color: #333; white-space: nowrap; }
.block .field.boxed { width: 1277px; height: 82px; margin-left: 14px; padding-bottom: 14px; border: 4px solid #ff0c00; border-radius: 6px; align-items: center; }
.block .field.boxed label { width: 263px; }
.boxed p { margin-top: 12px; }
.block .field.oneri { height: 66px; }
.oneri p { margin-top: -18px; }
.dlg-status { height: 40px; }
</style>
